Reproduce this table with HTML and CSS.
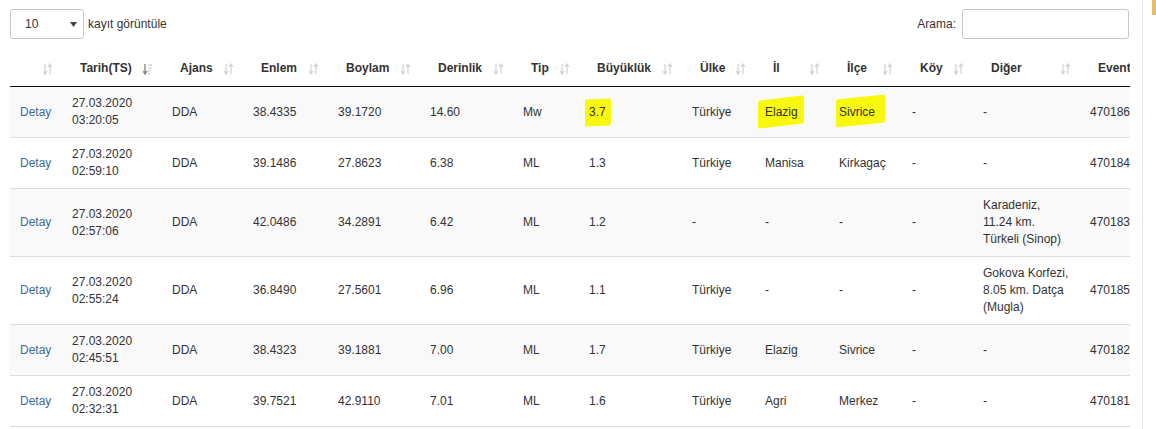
FILE: index.html
```html
<!DOCTYPE html>
<html lang="tr">
<head>
<meta charset="utf-8">
<title>Deprem Listesi</title>
<link rel="stylesheet" href="styles.css">
</head>
<body>
<div class="page">
  <main class="main">
    <div class="controls">
      <div class="length">
        <div class="select"><span>10</span><svg width="7" height="5" viewBox="0 0 7 5"><path d="M0 0h7L3.5 5z" fill="#444"/></svg></div>
        <span class="length-label">kayıt görüntüle</span>
      </div>
      <div class="search">
        <span class="search-label">Arama:</span>
        <div class="input"></div>
      </div>
    </div>
    <div class="table-wrap">
      <table class="dt">
        <colgroup>
          <col class="w52"><col class="w100"><col class="w81"><col class="w85"><col class="w92"><col class="w93"><col class="w66"><col class="w103"><col class="w73"><col class="w74"><col class="w73"><col class="w71"><col class="w107"><col class="w80">
        </colgroup>
        <thead>
          <tr>
            <th><div class="th"><span></span><svg class="si" width="9" height="12" viewBox="0 0 9 12"><path d="M2 1v9M0 8l2 3 2-3" stroke="#d4d4d4" stroke-width="1.3" fill="none"/><path d="M7 11V2M5 4l2-3 2 3" stroke="#d4d4d4" stroke-width="1.3" fill="none"/></svg></div></th>
            <th><div class="th"><span>Tarih(TS)</span><svg class="si" width="9" height="12" viewBox="0 0 9 12"><path d="M2 1v9M0 8l2 3 2-3" stroke="#8a8a8a" stroke-width="1.4" fill="none"/><path d="M5 2h4M5 5h3.5M5 8h3M5 10.5h2" stroke="#c4c4c4" stroke-width="1.2" fill="none"/></svg></div></th>
            <th><div class="th"><span>Ajans</span><svg class="si" width="9" height="12" viewBox="0 0 9 12"><path d="M2 1v9M0 8l2 3 2-3" stroke="#d4d4d4" stroke-width="1.3" fill="none"/><path d="M7 11V2M5 4l2-3 2 3" stroke="#d4d4d4" stroke-width="1.3" fill="none"/></svg></div></th>
            <th><div class="th"><span>Enlem</span><svg class="si" width="9" height="12" viewBox="0 0 9 12"><path d="M2 1v9M0 8l2 3 2-3" stroke="#d4d4d4" stroke-width="1.3" fill="none"/><path d="M7 11V2M5 4l2-3 2 3" stroke="#d4d4d4" stroke-width="1.3" fill="none"/></svg></div></th>
            <th><div class="th"><span>Boylam</span><svg class="si" width="9" height="12" viewBox="0 0 9 12"><path d="M2 1v9M0 8l2 3 2-3" stroke="#d4d4d4" stroke-width="1.3" fill="none"/><path d="M7 11V2M5 4l2-3 2 3" stroke="#d4d4d4" stroke-width="1.3" fill="none"/></svg></div></th>
            <th><div class="th"><span>Derinlik</span><svg class="si" width="9" height="12" viewBox="0 0 9 12"><path d="M2 1v9M0 8l2 3 2-3" stroke="#d4d4d4" stroke-width="1.3" fill="none"/><path d="M7 11V2M5 4l2-3 2 3" stroke="#d4d4d4" stroke-width="1.3" fill="none"/></svg></div></th>
            <th><div class="th"><span>Tip</span><svg class="si" width="9" height="12" viewBox="0 0 9 12"><path d="M2 1v9M0 8l2 3 2-3" stroke="#d4d4d4" stroke-width="1.3" fill="none"/><path d="M7 11V2M5 4l2-3 2 3" stroke="#d4d4d4" stroke-width="1.3" fill="none"/></svg></div></th>
            <th><div class="th"><span>Büyüklük</span><svg class="si" width="9" height="12" viewBox="0 0 9 12"><path d="M2 1v9M0 8l2 3 2-3" stroke="#d4d4d4" stroke-width="1.3" fill="none"/><path d="M7 11V2M5 4l2-3 2 3" stroke="#d4d4d4" stroke-width="1.3" fill="none"/></svg></div></th>
            <th><div class="th"><span>Ülke</span><svg class="si" width="9" height="12" viewBox="0 0 9 12"><path d="M2 1v9M0 8l2 3 2-3" stroke="#d4d4d4" stroke-width="1.3" fill="none"/><path d="M7 11V2M5 4l2-3 2 3" stroke="#d4d4d4" stroke-width="1.3" fill="none"/></svg></div></th>
            <th><div class="th"><span>İl</span><svg class="si" width="9" height="12" viewBox="0 0 9 12"><path d="M2 1v9M0 8l2 3 2-3" stroke="#d4d4d4" stroke-width="1.3" fill="none"/><path d="M7 11V2M5 4l2-3 2 3" stroke="#d4d4d4" stroke-width="1.3" fill="none"/></svg></div></th>
            <th><div class="th"><span>İlçe</span><svg class="si" width="9" height="12" viewBox="0 0 9 12"><path d="M2 1v9M0 8l2 3 2-3" stroke="#d4d4d4" stroke-width="1.3" fill="none"/><path d="M7 11V2M5 4l2-3 2 3" stroke="#d4d4d4" stroke-width="1.3" fill="none"/></svg></div></th>
            <th><div class="th"><span>Köy</span><svg class="si" width="9" height="12" viewBox="0 0 9 12"><path d="M2 1v9M0 8l2 3 2-3" stroke="#d4d4d4" stroke-width="1.3" fill="none"/><path d="M7 11V2M5 4l2-3 2 3" stroke="#d4d4d4" stroke-width="1.3" fill="none"/></svg></div></th>
            <th><div class="th"><span>Diğer</span><svg class="si" width="9" height="12" viewBox="0 0 9 12"><path d="M2 1v9M0 8l2 3 2-3" stroke="#d4d4d4" stroke-width="1.3" fill="none"/><path d="M7 11V2M5 4l2-3 2 3" stroke="#d4d4d4" stroke-width="1.3" fill="none"/></svg></div></th>
            <th><div class="th"><span>Event</span></div></th>
          </tr>
        </thead>
        <tbody>
          <tr class="odd">
            <td><a class="link" href="#">Detay</a></td>
            <td>27.03.2020<br>03:20:05</td>
            <td>DDA</td><td>38.4335</td><td>39.1720</td><td>14.60</td><td>Mw</td>
            <td><span class="hl hl-a">3.7</span></td>
            <td>Türkiye</td>
            <td><span class="hl hl-b">Elazig</span></td>
            <td><span class="hl hl-c">Sivrice</span></td>
            <td>-</td><td>-</td><td>470186</td>
          </tr>
          <tr>
            <td><a class="link" href="#">Detay</a></td>
            <td>27.03.2020<br>02:59:10</td>
            <td>DDA</td><td>39.1486</td><td>27.8623</td><td>6.38</td><td>ML</td><td>1.3</td>
            <td>Türkiye</td><td>Manisa</td><td>Kirkagaç</td><td>-</td><td>-</td><td>470184</td>
          </tr>
          <tr class="odd">
            <td><a class="link" href="#">Detay</a></td>
            <td>27.03.2020<br>02:57:06</td>
            <td>DDA</td><td>42.0486</td><td>34.2891</td><td>6.42</td><td>ML</td><td>1.2</td>
            <td>-</td><td>-</td><td>-</td><td>-</td><td>Karadeniz,<br>11.24 km.<br>Türkeli (Sinop)</td><td>470183</td>
          </tr>
          <tr>
            <td><a class="link" href="#">Detay</a></td>
            <td>27.03.2020<br>02:55:24</td>
            <td>DDA</td><td>36.8490</td><td>27.5601</td><td>6.96</td><td>ML</td><td>1.1</td>
            <td>Türkiye</td><td>-</td><td>-</td><td>-</td><td>Gokova Korfezi,<br>8.05 km. Datça<br>(Mugla)</td><td>470185</td>
          </tr>
          <tr class="odd">
            <td><a class="link" href="#">Detay</a></td>
            <td>27.03.2020<br>02:45:51</td>
            <td>DDA</td><td>38.4323</td><td>39.1881</td><td>7.00</td><td>ML</td><td>1.7</td>
            <td>Türkiye</td><td>Elazig</td><td>Sivrice</td><td>-</td><td>-</td><td>470182</td>
          </tr>
          <tr>
            <td><a class="link" href="#">Detay</a></td>
            <td>27.03.2020<br>02:32:31</td>
            <td>DDA</td><td>39.7521</td><td>42.9110</td><td>7.01</td><td>ML</td><td>1.6</td>
            <td>Türkiye</td><td>Agri</td><td>Merkez</td><td>-</td><td>-</td><td>470181</td>
          </tr>
        </tbody>
      </table>
    </div>
  </main>
  <aside class="side"><div class="gold"></div></aside>
</div>
</body>
</html>
```

FILE: styles.css
```css
* { box-sizing: border-box; }
html, body { margin: 0; padding: 0; background: #fff; }
body {
  font-family: "Liberation Sans", Arial, sans-serif;
  font-size: 12px;
  line-height: 17px;
  color: #333;
  overflow: hidden;
}
.page { display: flex; height: 429px; }
.main {
  width: 1143px;
  flex: none;
  padding: 9px 0 0 10px;
  border-right: 1px solid #e3e3e3;
}
.side { flex: 1; }
.gold { height: 15px; width: 4px; margin-left: auto; background: #e7bd68; }

.controls {
  width: 1120px;
  height: 30px;
  display: flex;
  justify-content: space-between;
  align-items: center;
  margin-bottom: 11px;
}
.length { display: flex; align-items: center; }
.select {
  width: 74px;
  height: 30px;
  border: 1px solid #c6c6c6;
  border-radius: 3px;
  display: flex;
  align-items: center;
  justify-content: space-between;
  padding: 0 6px 0 14px;
}
.length-label { margin-left: 4px; }
.search { display: flex; align-items: center; margin-right: 1px; }
.search-label { margin-right: 6px; }
.input {
  width: 167px;
  height: 30px;
  border: 1px solid #c6c6c6;
  border-radius: 3px;
}

.table-wrap { width: 1120px; overflow: hidden; }
.dt {
  table-layout: fixed;
  width: 1150px;
  border-collapse: separate;
  border-spacing: 0;
}
.w52 { width: 52px; } .w100 { width: 100px; } .w81 { width: 81px; } .w85 { width: 85px; }
.w92 { width: 92px; } .w93 { width: 93px; } .w66 { width: 66px; } .w103 { width: 103px; }
.w73 { width: 73px; } .w74 { width: 74px; } .w71 { width: 71px; } .w107 { width: 107px; }
.w80 { width: 80px; }

.dt th {
  padding: 10px 10px 9px 18px;
  border-bottom: 1px solid #111;
  font-weight: bold;
  text-align: left;
  white-space: nowrap;
}
.th { display: flex; justify-content: space-between; align-items: center; height: 17px; }
.si { flex: none; }
.dt td {
  padding: 8px 10px;
  border-top: 1px solid #ddd;
  vertical-align: middle;
  white-space: nowrap;
}
.dt tbody tr:first-child td { border-top: none; }
.dt tbody tr:last-child td { border-bottom: 1px solid #ddd; }
.dt tr.odd td { background: #f9f9f9; }
.link { color: #3d6b96; text-decoration: none; }

.hl { position: relative; z-index: 0; display: inline-block; }
.hl::before {
  content: "";
  position: absolute;
  z-index: -1;
  background: #f8f80c;
  border-radius: 2px;
}
.hl-a::before { left: -4px; right: -5px; top: -5px; bottom: -5px; transform: skewY(-3deg); }
.hl-b::before { left: -7px; right: -6px; top: -6px; bottom: -5px; transform: skewY(-7deg); }
.hl-c::before { left: -3px; right: -10px; top: -7px; bottom: -4px; transform: skewY(-6deg); }
```
